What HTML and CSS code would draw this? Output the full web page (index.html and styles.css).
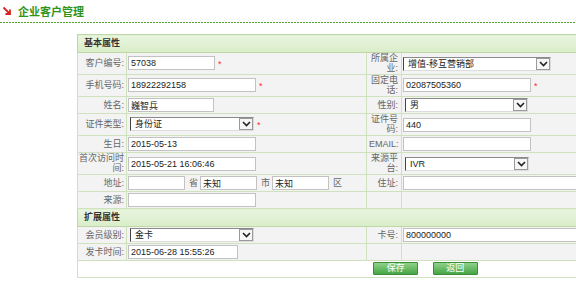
FILE: index.html
```html
<!DOCTYPE html>
<html lang="zh-CN">
  <head>
    <meta charset="UTF-8" />
    <title>企业客户管理</title>
    <link rel="stylesheet" href="styles.css">
  </head>
  <body>
    <div class="page-title">
      <svg class="title-icon" width="10" height="10" viewBox="0 0 10 10">
        <path d="M1.5 1.5 L8 8 M8 3.5 L8 8 L3.5 8" fill="none" stroke="#d8231c" stroke-width="1.8" />
      </svg>
      <span>企业客户管理</span>
    </div>

    <div class="content">
      <table class="form-table">
        <colgroup>
          <col class="c-label" />
          <col class="c-value" />
          <col class="c-label2" />
          <col class="c-value2" />
        </colgroup>
        <tr class="group"><th colspan="4">基本属性</th></tr>
        <tr>
          <td class="label">客户编号:</td>
          <td class="value"><input class="w87" value="57038" /><span class="req">*</span></td>
          <td class="label label-r">所属企业:</td>
          <td class="value">
            <span class="select w148"><select><option>增值-移互营销部</option></select><span class="arrow"><svg width="9" height="6" viewBox="0 0 9 6"><path d="M1 1 L4.5 4.5 L8 1" fill="none" stroke="#222" stroke-width="1.6" /></svg></span></span>
          </td>
        </tr>
        <tr>
          <td class="label">手机号码:</td>
          <td class="value"><input class="w128" value="18922292158" /><span class="req">*</span></td>
          <td class="label label-r">固定电话:</td>
          <td class="value"><input class="w128" value="02087505360" /><span class="req">*</span></td>
        </tr>
        <tr>
          <td class="label">姓名:</td>
          <td class="value"><input class="w86" value="巍智兵" /></td>
          <td class="label label-r">性别:</td>
          <td class="value">
            <span class="select s-pad w123"><select><option>男</option></select><span class="arrow"><svg width="9" height="6" viewBox="0 0 9 6"><path d="M1 1 L4.5 4.5 L8 1" fill="none" stroke="#222" stroke-width="1.6" /></svg></span></span>
          </td>
        </tr>
        <tr>
          <td class="label">证件类型:</td>
          <td class="value">
            <span class="select s-pad w124"><select><option>身份证</option></select><span class="arrow"><svg width="9" height="6" viewBox="0 0 9 6"><path d="M1 1 L4.5 4.5 L8 1" fill="none" stroke="#222" stroke-width="1.6" /></svg></span></span><span class="req">*</span>
          </td>
          <td class="label label-r">证件号码:</td>
          <td class="value"><input class="w128" value="440" /></td>
        </tr>
        <tr>
          <td class="label">生日:</td>
          <td class="value"><input class="w128" value="2015-05-13" /></td>
          <td class="label label-r">EMAIL:</td>
          <td class="value"><input class="w128" value="" /></td>
        </tr>
        <tr>
          <td class="label">首次访问时间:</td>
          <td class="value"><input class="w128" value="2015-05-21 16:06:46" /></td>
          <td class="label label-r">来源平台:</td>
          <td class="value">
            <span class="select s-pad w124"><select><option>IVR</option></select><span class="arrow"><svg width="9" height="6" viewBox="0 0 9 6"><path d="M1 1 L4.5 4.5 L8 1" fill="none" stroke="#222" stroke-width="1.6" /></svg></span></span>
          </td>
        </tr>
        <tr>
          <td class="label">地址:</td>
          <td class="value">
            <input class="w57" value="" /><span class="unit">省</span><input class="w57" value="未知" /><span class="unit">市</span><input class="w57" value="未知" /><span class="unit">区</span>
          </td>
          <td class="label label-r">住址:</td>
          <td class="value"><input class="w-full" value="" /></td>
        </tr>
        <tr>
          <td class="label">来源:</td>
          <td class="value"><input class="w128" value="" /></td>
          <td class="label label-r"></td>
          <td class="value"></td>
        </tr>
        <tr class="group"><th colspan="4">扩展属性</th></tr>
        <tr>
          <td class="label">会员级别:</td>
          <td class="value">
            <span class="select s-pad w124"><select><option>金卡</option></select><span class="arrow"><svg width="9" height="6" viewBox="0 0 9 6"><path d="M1 1 L4.5 4.5 L8 1" fill="none" stroke="#222" stroke-width="1.6" /></svg></span></span>
          </td>
          <td class="label label-r">卡号:</td>
          <td class="value"><input class="w-full" value="800000000" /></td>
        </tr>
        <tr>
          <td class="label">发卡时间:</td>
          <td class="value"><input class="w110" value="2015-06-28 15:55:26" /></td>
          <td class="label label-r"></td>
          <td class="value"></td>
        </tr>
        <tr class="actions">
          <td colspan="4">
            <button type="button" class="btn">保存</button>
            <button type="button" class="btn">返回</button>
          </td>
        </tr>
      </table>
    </div>
  </body>
</html>
```

FILE: styles.css
```css
html,
body {
  overflow: hidden;
}
body {
  margin: 0;
  font-family: "Liberation Sans", "Noto Sans CJK SC", sans-serif;
  font-size: 9px;
  color: #333;
  background-color: #ffffff;
}

.page-title {
  display: flex;
  align-items: center;
  gap: 6px;
  height: 23px;
  padding-left: 2px;
  padding-bottom: 2px;
  box-sizing: border-box;
  font-size: 11px;
  font-weight: bold;
  color: #2f9418;
  background-image: repeating-linear-gradient(90deg, #4ea32f 0 2px, transparent 2px 3px);
  background-size: 100% 1px;
  background-repeat: no-repeat;
  background-position: bottom left;
}
.title-icon {
  margin-top: 1px;
}

.content {
  padding: 11px 0 0 77px;
}

.form-table {
  width: 696px;
  table-layout: fixed;
  border-collapse: collapse;
  border: 1px solid #bfd6a9;
}
.c-label {
  width: 49px;
}
.c-value {
  width: 240px;
}
.c-label2 {
  width: 35px;
}
.c-value2 {
  width: 372px;
}

.form-table td {
  padding: 1px 0;
  line-height: 14px;
  border: 1px solid #cfe1bd;
  background-color: #f3f3f3;
  vertical-align: middle;
}
.group th {
  padding: 0 6px;
  line-height: 17px;
  text-align: left;
  font-weight: bold;
  color: #333;
  border: 1px solid #bfd6a9;
  background: linear-gradient(#e9f5df, #d9edc9);
}

.form-table .label {
  text-align: right;
  color: #666;
  line-height: 10px;
  padding: 0 2px 1px 1px;
}
.form-table .label-r {
  padding: 0 3px 1px 2px;
}
.form-table .value {
  white-space: nowrap;
  padding-left: 1px;
}

input {
  box-sizing: border-box;
  height: 14px;
  padding: 0 2px;
  border: 1px solid #c2c2c2;
  font-family: inherit;
  font-size: 9px;
  color: #222;
  background-color: #ffffff;
  vertical-align: top;
  outline: none;
}
.w57 {
  width: 57px;
}
.w86 {
  width: 86px;
}
.w87 {
  width: 87px;
}
.w110 {
  width: 110px;
}
.w123 {
  width: 123px;
}
.w124 {
  width: 124px;
}
.w128 {
  width: 128px;
}
.w148 {
  width: 148px;
}
.w-full {
  width: 200px;
}

.select {
  display: inline-flex;
  align-items: center;
  box-sizing: border-box;
  height: 14px;
  border: 1px solid;
  border-color: #8a8a8a #dcdcdc #dcdcdc #444;
  background-color: #ffffff;
  vertical-align: top;
}
.s-pad {
  margin-left: 2px;
}
.select select {
  flex: 1;
  min-width: 0;
  appearance: none;
  border: none;
  background: transparent;
  padding: 0 0 0 4px;
  font-family: inherit;
  font-size: 9px;
  line-height: 12px;
  color: #222;
  outline: none;
}
.select .arrow {
  display: flex;
  align-items: center;
  justify-content: center;
  box-sizing: border-box;
  width: 14px;
  height: 12px;
  border: 1px solid #9a9a9a;
  background-color: #f6f6f6;
}

.req {
  margin-left: 3px;
  color: #ff2a2a;
  font-size: 9px;
  vertical-align: top;
  line-height: 16px;
}
.unit {
  display: inline-block;
  margin: 0 2px 0 4px;
  color: #666;
  vertical-align: top;
}

.actions td {
  text-align: center;
  background-color: #ffffff;
}
.btn {
  width: 45px;
  height: 13px;
  margin: 0 6px;
  padding: 0;
  border: 1px solid #3d8c3a;
  border-radius: 1px;
  background: linear-gradient(#8fd28a, #46a544);
  color: #ffffff;
  font-family: inherit;
  font-size: 9px;
  line-height: 11px;
  vertical-align: top;
  cursor: pointer;
}
```
